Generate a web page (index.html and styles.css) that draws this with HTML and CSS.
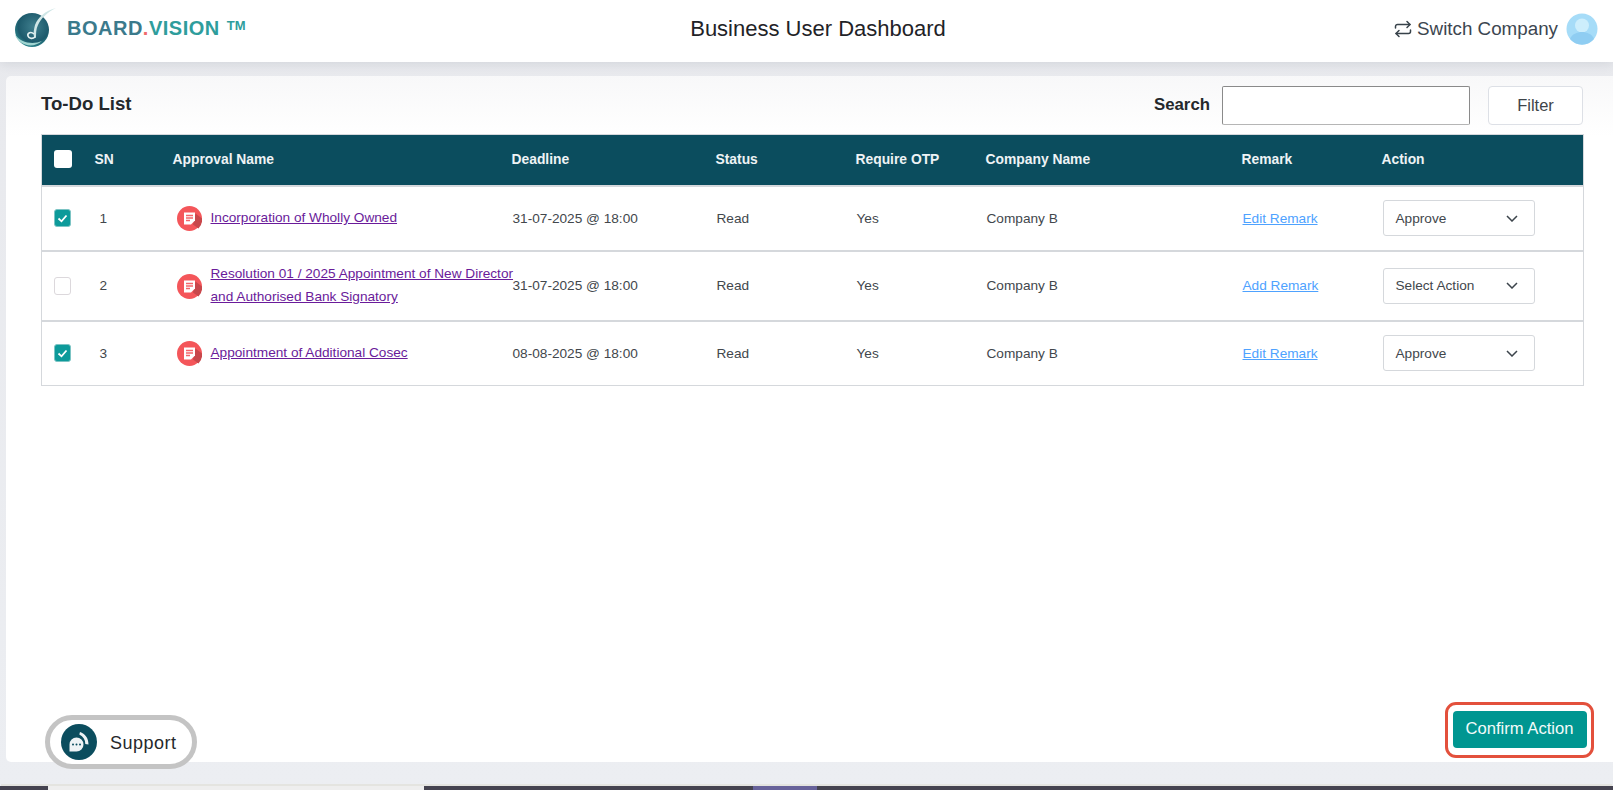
FILE: index.html
```html
<!DOCTYPE html>
<html lang="en">
<head>
<meta charset="utf-8">
<title>Business User Dashboard</title>
<link rel="stylesheet" href="styles.css">
</head>
<body>
<header class="topbar">
  <div class="brand">
    <svg class="logo" width="46" height="40" viewBox="0 0 46 40">
      <defs>
        <radialGradient id="orb" cx="55%" cy="40%" r="65%">
          <stop offset="0" stop-color="#3f7f8e"/>
          <stop offset="0.7" stop-color="#1d5a6c"/>
          <stop offset="1" stop-color="#2f8f94"/>
        </radialGradient>
      </defs>
      <circle cx="20" cy="22" r="17" fill="url(#orb)"/>
      <path d="M3 26c2 10 17 16 27 7-9 4-22 2-27-7z" fill="#9fd4d0"/>
      <path d="M44 0C33 3 26 9 23 17c-1 4-2 8-1 12l2 1c0-5 0-9 2-13C29 10 36 4 44 0z" fill="#cfe6e6"/>
      <path d="M22 26c-3-3-7-1-6 2 1 3 5 3 7 1" fill="none" stroke="#e6f2f2" stroke-width="1.6"/>
    </svg>
    <span class="brand-name"><span class="b1">BOARD</span><span class="b2">.</span><span class="b3">VISION</span></span>
    <span class="tm">TM</span>
  </div>
  <h1 class="page-title">Business User Dashboard</h1>
  <div class="account">
    <svg class="switch" width="18" height="18" viewBox="0 0 18 18" fill="none" stroke="#37424a" stroke-width="1.5" stroke-linecap="round" stroke-linejoin="round">
      <path d="M1.5 8V6.5A2 2 0 0 1 3.5 4.5H16"/><path d="M13 1.5l3 3-3 3"/>
      <path d="M16.500 10v1.500a2 2 0 0 1-2 2H2"/><path d="M5 10.500l-3 3 3 3"/>
    </svg>
    <span class="switch-label">Switch Company</span>
    <svg class="avatar" width="32" height="32" viewBox="0 0 32 32">
      <circle cx="16" cy="16" r="15.500" fill="#a6dcf8"/>
      <circle cx="16" cy="12.500" r="7" fill="#cdeefc"/>
      <path d="M4 26c2-5 7-7 12-7s10 2 12 7a15.500 15.500 0 0 1-24 0z" fill="#8fcdf2"/>
    </svg>
  </div>
</header>

<main class="card">
  <div class="toolbar">
    <h2 class="list-title">To-Do List</h2>
    <div class="tools">
      <label class="search-label" for="q">Search</label>
      <input class="search" id="q" type="text">
      <button class="filter" type="button">Filter</button>
    </div>
  </div>

  <table class="todo">
    <colgroup>
      <col class="c-check"><col class="c-sn"><col class="c-name"><col class="c-date"><col class="c-status"><col class="c-otp"><col class="c-company"><col class="c-remark"><col class="c-action">
    </colgroup>
    <thead>
      <tr>
        <th><span class="box box-head"></span></th>
        <th>SN</th><th>Approval Name</th><th>Deadline</th><th>Status</th><th>Require OTP</th><th>Company Name</th><th>Remark</th><th>Action</th>
      </tr>
    </thead>
    <tbody>
      <tr class="r1">
        <td><span class="box box-on"><svg width="11" height="9" viewBox="0 0 11 9"><path d="M1.500 4.500l3 2.800 5-5.800" fill="none" stroke="#fff" stroke-width="1.800"/></svg></span></td>
        <td class="sn">1</td>
        <td><div class="approval"><svg class="doc" width="25" height="25" viewBox="0 0 25 25"><circle cx="12.500" cy="12.500" r="12.500" fill="#f4565a"/><path d="M16 18.500l5.500 4A12.500 12.500 0 0 0 25 12.500l-6.500-5z" fill="#c8474b"/><path d="M7 6.500h11v8l-4 4H7z" fill="#fff"/><path d="M9 9.500h7M9 12h7M9 14.500h4" stroke="#f4656a" stroke-width="1.300"/></svg><a href="#">Incorporation of Wholly Owned</a></div></td>
        <td>31-07-2025 @ 18:00</td><td>Read</td><td>Yes</td><td>Company B</td>
        <td><a class="remark" href="#">Edit Remark</a></td>
        <td><div class="select"><span>Approve</span><svg width="12" height="7" viewBox="0 0 12 7"><path d="M1 1l5 5 5-5" fill="none" stroke="#3c444b" stroke-width="1.500"/></svg></div></td>
      </tr>
      <tr class="r2">
        <td><span class="box"></span></td>
        <td class="sn">2</td>
        <td><div class="approval"><svg class="doc" width="25" height="25" viewBox="0 0 25 25"><circle cx="12.500" cy="12.500" r="12.500" fill="#f4565a"/><path d="M16 18.500l5.500 4A12.500 12.500 0 0 0 25 12.500l-6.500-5z" fill="#c8474b"/><path d="M7 6.500h11v8l-4 4H7z" fill="#fff"/><path d="M9 9.500h7M9 12h7M9 14.500h4" stroke="#f4656a" stroke-width="1.300"/></svg><a href="#">Resolution 01 / 2025 Appointment of New Director and Authorised Bank Signatory</a></div></td>
        <td>31-07-2025 @ 18:00</td><td>Read</td><td>Yes</td><td>Company B</td>
        <td><a class="remark" href="#">Add Remark</a></td>
        <td><div class="select"><span>Select Action</span><svg width="12" height="7" viewBox="0 0 12 7"><path d="M1 1l5 5 5-5" fill="none" stroke="#3c444b" stroke-width="1.500"/></svg></div></td>
      </tr>
      <tr class="r3">
        <td><span class="box box-on"><svg width="11" height="9" viewBox="0 0 11 9"><path d="M1.500 4.500l3 2.800 5-5.800" fill="none" stroke="#fff" stroke-width="1.800"/></svg></span></td>
        <td class="sn">3</td>
        <td><div class="approval"><svg class="doc" width="25" height="25" viewBox="0 0 25 25"><circle cx="12.500" cy="12.500" r="12.500" fill="#f4565a"/><path d="M16 18.500l5.500 4A12.500 12.500 0 0 0 25 12.500l-6.500-5z" fill="#c8474b"/><path d="M7 6.500h11v8l-4 4H7z" fill="#fff"/><path d="M9 9.500h7M9 12h7M9 14.500h4" stroke="#f4656a" stroke-width="1.300"/></svg><a href="#">Appointment of Additional Cosec</a></div></td>
        <td>08-08-2025 @ 18:00</td><td>Read</td><td>Yes</td><td>Company B</td>
        <td><a class="remark" href="#">Edit Remark</a></td>
        <td><div class="select"><span>Approve</span><svg width="12" height="7" viewBox="0 0 12 7"><path d="M1 1l5 5 5-5" fill="none" stroke="#3c444b" stroke-width="1.500"/></svg></div></td>
      </tr>
    </tbody>
  </table>

  <div class="actions">
    <div class="ring">
      <button class="confirm" type="button">Confirm Action</button>
    </div>
  </div>
</main>

<div class="taskbar">
  <span class="t-dark t-a"></span><span class="t-light"></span><span class="t-dark t-b"></span><span class="t-violet"></span><span class="t-dark t-c"></span>
</div>

<button class="support" type="button">
  <span class="support-icon">
    <svg width="26" height="26" viewBox="0 0 26 26">
      <path d="M10.500 8.500a7 7 0 0 1 0 14H3.500v-7a7 7 0 0 1 7-7z" fill="#eef3f5"/>
      <path d="M14 3c5 1.500 8.500 6 8.500 12.500l-3.200-.5c0-4-2-7.500-6-9.500z" fill="#eef3f5"/>
      <circle cx="7" cy="15.500" r="1" fill="#0b4d5e"/><circle cx="10.500" cy="15.500" r="1" fill="#0b4d5e"/><circle cx="14" cy="15.500" r="1" fill="#0b4d5e"/>
    </svg>
  </span>
  <span class="support-label">Support</span>
</button>
</body>
</html>
```
FILE: styles.css
```css
* { box-sizing: border-box; }
html, body { margin: 0; height: 100%; }
body {
  width: 1613px;
  height: 790px;
  overflow: hidden;
  position: relative;
  display: flex;
  flex-direction: column;
  background: linear-gradient(#e8e9ed 0, #eceef2 100%);
  font-family: "Liberation Sans", Arial, sans-serif;
  color: #3e4449;
}

.topbar {
  flex: 0 0 62px;
  display: grid;
  grid-template-columns: 1fr auto 1fr;
  align-items: center;
  background: #fff;
  padding: 0 15px 5px 12px;
  box-shadow: 0 2px 10px rgba(60, 70, 90, .12);
  position: relative;
}
.brand { display: flex; align-items: center; }
.logo { margin-right: 9px; margin-top: -1px; }
.brand-name { font-size: 20px; font-weight: 700; letter-spacing: .5px; }
.b1 { color: #3b7a8c; }
.b2 { color: #f0696b; }
.b3 { color: #2e9d9c; }
.tm { font-size: 13px; font-weight: 700; color: #2e9d9c; margin-left: 7px; margin-top: -7px; }
.page-title { margin: 0; padding-left: 26px; font-size: 22px; font-weight: 400; color: #1f2327; }
.account { display: flex; align-items: center; justify-content: flex-end; }
.switch { margin-right: 5px; }
.switch-label { font-size: 18.800px; color: #3c4650; margin-right: 8px; }
.avatar { margin-top: 1px; }

.card {
  flex: 0 0 686px;
  margin: 14px 0 0 6px;
  background: linear-gradient(#f8f8f9 0, #fff 60px);
  border-radius: 5px 0 0 5px;
  padding: 0 29px 0 35px;
  display: flex;
  flex-direction: column;
}
.toolbar {
  flex: 0 0 58px;
  display: flex;
  align-items: center;
  justify-content: space-between;
}
.list-title { margin: 0 0 3px; font-size: 18.600px; font-weight: 700; color: #24282c; }
.tools { display: flex; align-items: center; }
.search-label { font-size: 16.800px; font-weight: 700; color: #24282c; margin-right: 12px; }
.search {
  width: 248px;
  height: 39px;
  border: 1px solid #8a8a8a;
  border-bottom-color: #b5b5b5;
  border-radius: 2px;
  background: #fff;
  margin-right: 18px;
}
.filter {
  width: 95px;
  height: 39px;
  border: 1px solid #dde0e6;
  border-radius: 4px;
  background: #fff;
  color: #3e4449;
  font: 16.500px "Liberation Sans", Arial, sans-serif;
  margin-right: 1px;
}

.todo {
  width: 1542px;
  table-layout: fixed;
  border-collapse: collapse;
  font-size: 13.650px;
  border: 1px solid #d5d8dc;
}
.c-check { width: 53px; }
.c-sn { width: 78px; }
.c-name { width: 339px; }
.c-date { width: 204px; }
.c-status { width: 140px; }
.c-otp { width: 130px; }
.c-company { width: 256px; }
.c-remark { width: 140px; }
.c-action { width: 202px; }

.todo th {
  height: 51px;
  background: #0b4d5e;
  color: #eef3f5;
  font-size: 13.850px;
  font-weight: 700;
  text-align: left;
  padding: 0 0 2px;
  border-bottom: 2px solid #d5d8dc;
}
.todo th:first-child, .todo td:first-child { padding-left: 12px; }
.todo td { padding: 0; color: #42474c; border-bottom: 2px solid #d5d8dc; }
.todo td:nth-child(n+4) { padding-left: 1px; }
.r1 td { height: 65px; }
.r2 td { height: 70px; }
.r3 td { height: 65px; border-bottom: 0; }
.sn { padding-left: 5px !important; }

.box {
  display: flex;
  align-items: center;
  justify-content: center;
  width: 17px;
  height: 18px;
  border: 1px solid #dcd8dc;
  border-radius: 3px;
  background: #fff;
}
.box-head { width: 18px; border: 0; }
.box-on { background: #0d9a9a; border-color: #7cc4c4; }

.approval { display: flex; align-items: center; padding-left: 4px; }
.doc { flex: none; margin-right: 9px; margin-top: 1px; }
.approval a {
  color: #6a1b9a;
  line-height: 23px;
  margin-top: -1px;
  margin-right: -7px;
}
.remark { color: #4ea2ff; }
.select {
  width: 152px;
  height: 36px;
  display: flex;
  align-items: center;
  justify-content: space-between;
  padding: 0 16px 0 12px;
  border: 1px solid #d5d8dc;
  border-radius: 3px;
  background: #fff;
  color: #42474c;
}

.actions {
  margin-top: auto;
  display: flex;
  justify-content: flex-end;
  padding-bottom: 4px;
  margin-right: -10px;
}
.ring {
  display: flex;
  padding: 5.500px 4.500px 7.500px;
  border: 3.500px solid #e3503c;
  border-radius: 11px;
}
.confirm {
  width: 134px;
  height: 37px;
  border: 0;
  border-radius: 4px;
  background: #009691;
  color: #f2fbfa;
  font: 16.600px "Liberation Sans", Arial, sans-serif;
}

.taskbar {
  position: absolute;
  left: 0;
  right: 0;
  bottom: 0;
  height: 4px;
  display: flex;
  box-shadow: 0 -3px 0 -1px #e4e4e0;
}
.t-dark { background: #454350; }
.t-a { width: 48px; }
.t-light { width: 376px; background: #eeeeee; }
.t-b { width: 329px; }
.t-violet { width: 64px; background: #67629a; }
.t-c { flex: 1; }

.support {
  position: absolute;
  left: 45px;
  top: 715px;
  width: 152px;
  height: 54px;
  display: flex;
  align-items: center;
  gap: 13px;
  padding: 0 0 0 12px;
  border: 5px solid #c4c4c4;
  border-radius: 27px;
  background: #fff;
  color: #25282b;
  font: 18px "Liberation Sans", Arial, sans-serif;
  letter-spacing: .5px;
}
.support-label { padding-top: 2px; }
.support-icon {
  flex: none;
  width: 36px;
  height: 36px;
  margin-left: -1px;
  border-radius: 50%;
  background: #0b4d5e;
  display: flex;
  align-items: center;
  justify-content: center;
}
```
